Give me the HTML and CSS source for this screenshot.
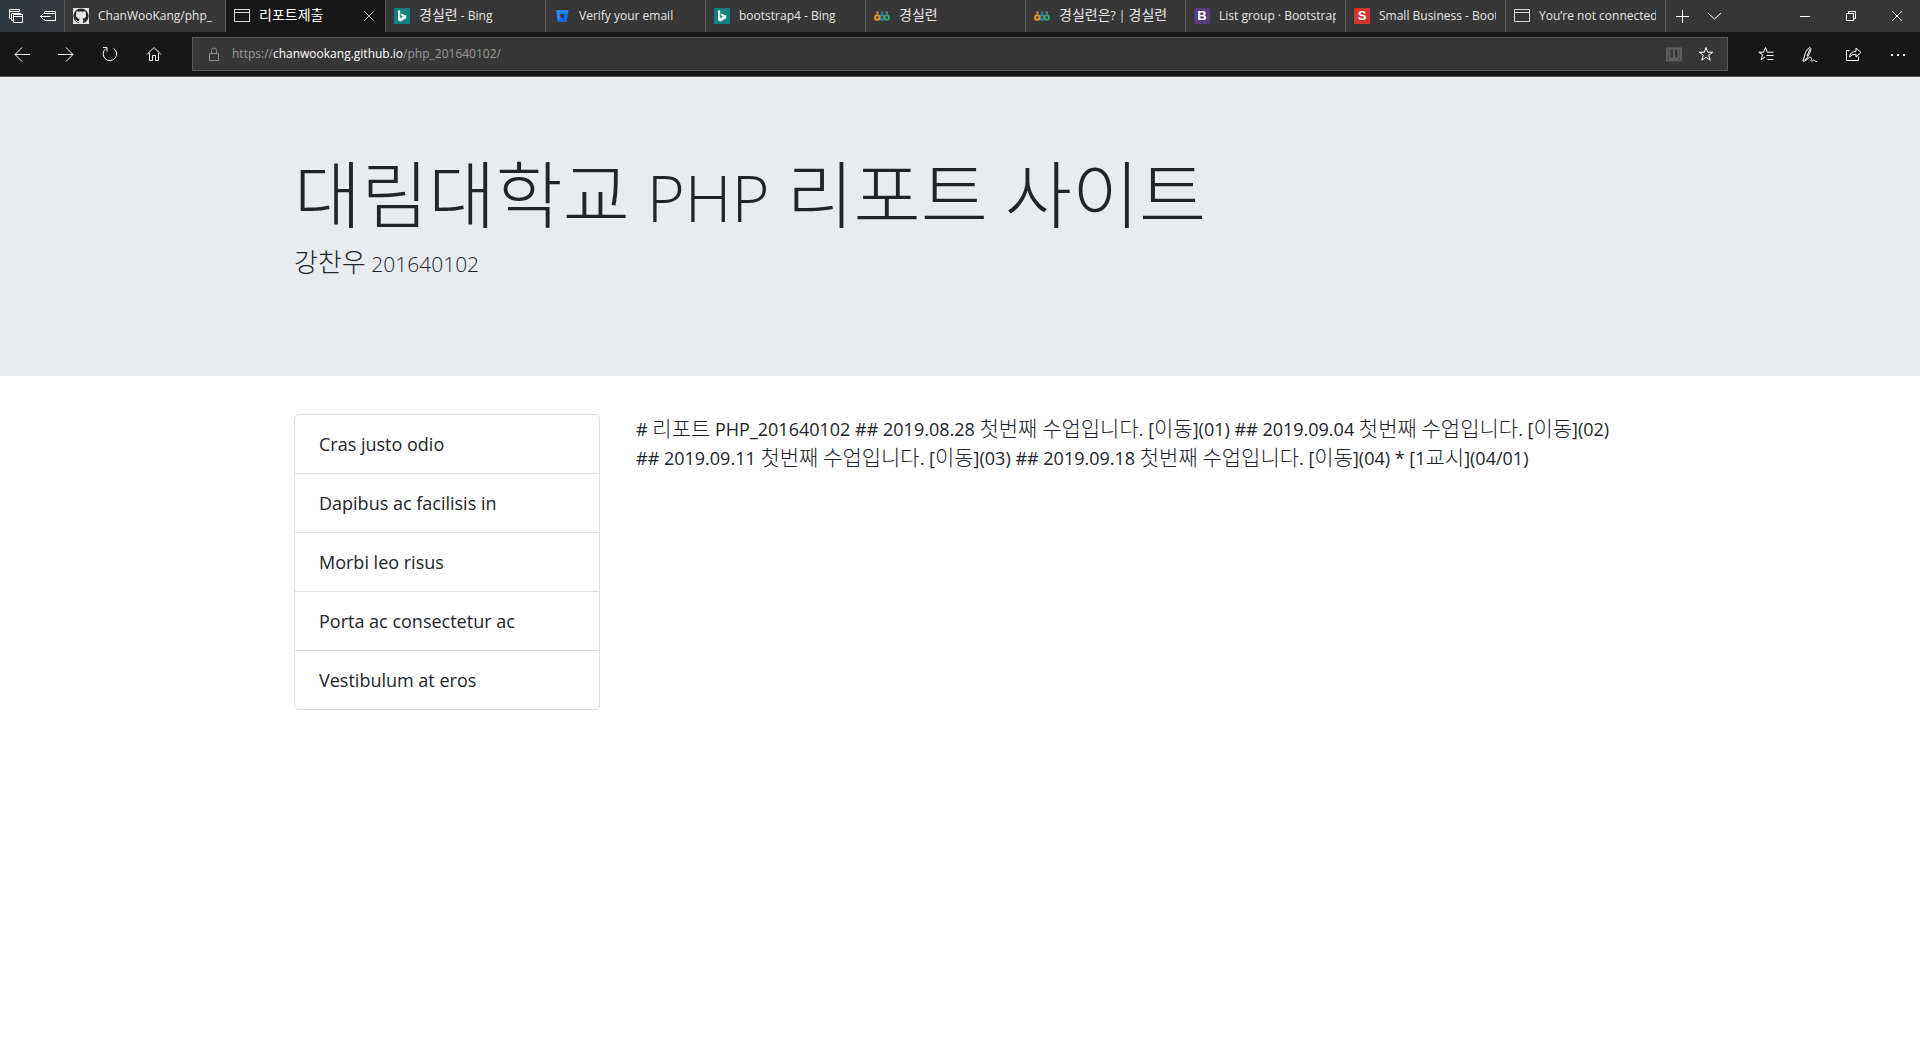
FILE: index.html
```html
<!DOCTYPE html>
<html lang="ko">
<head>
<meta charset="utf-8">
<meta name="viewport" content="width=device-width, initial-scale=1">
<title>리포트제출</title>
<link rel="stylesheet" href="styles.css">
</head>
<body>
<svg class="defs" aria-hidden="true">
  <symbol id="bing" viewBox="0 0 16 16"><path fill="#117f7b" d="M0 0h16v16H0z"/><path fill="#f2f7f7" d="M4 2l2.200.8v7.400l2.800-1.700-1.500-.7-.9-2.300 5.600 2v2.700L6.300 13.500 4 12.200z"/></symbol>
  <symbol id="page" viewBox="0 0 16 16"><path fill="none" stroke="#d8d8d8" d="M.5 1.500h15v12H.5zM.5 4.500h15"/></symbol>
  <symbol id="rings" viewBox="0 0 16 16"><g fill="none" stroke-width="2"><circle cx="8" cy="9.500" r="2.300" stroke="#1c8fd0"/><circle cx="12.700" cy="9.500" r="2.300" stroke="#35a36c"/><circle cx="3.300" cy="9.500" r="2.300" stroke="#e8931c"/></g><circle cx="3.500" cy="4.500" r="1.200" fill="#e8931c"/><circle cx="8.200" cy="4.500" r="1.200" fill="#1c8fd0"/><circle cx="12.900" cy="4.500" r="1.200" fill="#35a36c"/></symbol>
</svg>

<header class="browser">
  <div class="tabstrip">
    <div class="tab-tools">
      <button aria-label="Tabs set aside"><svg width="16" height="16" viewBox="0 0 16 16"><path d="M3.500 10.500h-2v-9h10v2M1.500 3.500h10M5.500 12.500h-2v-7h9v1M5.500 6.500h9v8h-9zM5.500 8.500h9"/></svg></button>
      <button aria-label="Set tabs aside"><svg width="16" height="16" viewBox="0 0 16 16"><path d="M4.500 6V3.500h11v9h-11V11M4.500 5.500h11M.5 8.500h10M3.500 5.500l-3 3 3 3"/></svg></button>
    </div>
    <nav class="tabs" aria-label="Tabs">
      <button class="tab"><svg width="16" height="16" viewBox="0 0 16 16"><path fill="#e4e4e4" d="M0 0h16v16H0z"/><circle cx="8" cy="8" r="7.600" fill="#272727"/><path fill="#e4e4e4" d="M3.500 3l2 .8q2.500-.5 5 0l2-.8.3 2.500q1.300 4.500-3.300 5.300.7.700.7 1.600V16H5.800v-2q-2 .5-2.800-1.500l-.8-.8q1.300-.2 2 1.200.7.600 1.700.2 0-1.300.7-2.300Q2 10 3.200 5.500z"/></svg><span class="label">ChanWooKang/php_</span></button>
      <button class="tab active"><svg width="16" height="16"><use href="#page"/></svg><span class="label"><span class="ko">리포트제출</span></span><svg class="close" width="12" height="12" viewBox="0 0 12 12"><path d="M1 1l10 10M11 1L1 11"/></svg></button>
      <button class="tab"><svg width="16" height="16"><use href="#bing"/></svg><span class="label"><span class="ko">경실련</span> - Bing</span></button>
      <button class="tab"><svg width="16" height="16" viewBox="0 0 16 16"><path fill="#2684ff" fill-rule="evenodd" d="M2 2h12.500l-1.800 12H3.800zM6 6l.7 4h3.100l.6-4z"/><path fill="#0b55d0" fill-opacity=".6" d="M10.400 6h3.500l-1.200 8H3.800l3-4h3z"/></svg><span class="label">Verify your email</span></button>
      <button class="tab"><svg width="16" height="16"><use href="#bing"/></svg><span class="label">bootstrap4 - Bing</span></button>
      <button class="tab"><svg width="16" height="16"><use href="#rings"/></svg><span class="label"><span class="ko">경실련</span></span></button>
      <button class="tab"><svg width="16" height="16"><use href="#rings"/></svg><span class="label"><span class="ko">경실련은</span>? | <span class="ko">경실련</span></span></button>
      <button class="tab"><span class="favicon bootstrap" aria-hidden="true">B</span><span class="label">List group · Bootstrap</span></button>
      <button class="tab"><span class="favicon start" aria-hidden="true">S</span><span class="label">Small Business - Boot</span></button>
      <button class="tab"><svg width="16" height="16"><use href="#page"/></svg><span class="label">You’re not connected</span></button>
    </nav>
    <div class="new-tab">
      <button aria-label="New tab"><svg width="16" height="16" viewBox="0 0 16 16"><path d="M8.500 2v13M2 8.500h13"/></svg></button>
      <button aria-label="Tab previews"><svg width="16" height="16" viewBox="0 0 16 16"><path d="M2 5l6.500 6L15 5"/></svg></button>
    </div>
    <div class="window-controls">
      <button aria-label="Minimize"><svg width="12" height="12" viewBox="0 0 12 12"><path d="M1 6.500h10"/></svg></button>
      <button aria-label="Restore"><svg width="12" height="12" viewBox="0 0 12 12"><path d="M1.500 3.500h7v7h-7zM3.500 3.500v-2h7v7h-2"/></svg></button>
      <button aria-label="Close"><svg width="12" height="12" viewBox="0 0 12 12"><path d="M1 1l10 10M11 1L1 11"/></svg></button>
    </div>
  </div>

  <div class="toolbar">
    <div class="tools nav-tools">
      <button aria-label="Back"><svg width="16" height="16" viewBox="0 0 16 16"><path d="M1 8.500h15M8 1.500l-7 7 7 7"/></svg></button>
      <button aria-label="Forward"><svg width="16" height="16" viewBox="0 0 16 16"><path d="M0 8.500h15M8 1.500l7 7-7 7"/></svg></button>
      <button aria-label="Refresh"><svg width="16" height="16" viewBox="0 0 16 16"><path d="M4 2.500a6.700 6.700 0 1 0 7.500-.2M1 1.500h4v4"/></svg></button>
      <button aria-label="Home"><svg width="16" height="16" viewBox="0 0 16 16"><path d="M1 8.500l7-7 7 7M3.500 7v7.500h3v-5h3v5h3V7"/></svg></button>
    </div>
    <div class="address">
      <svg class="lock" width="12" height="14" viewBox="0 0 12 14"><path d="M1.500 6.500h9v7h-9zM3.500 6.500V3.500a2.500 2.500 0 0 1 5 0v3"/></svg>
      <div class="url" role="textbox" aria-label="Address">https://<span class="host">chanwookang.github.io</span>/php_201640102/</div>
      <button class="reading" aria-label="Reading view"><svg width="16" height="16" viewBox="0 0 16 16"><path d="M1 2.500h14v12H1zM3.500 2.500h3L8 3.500l1.500-1h3v10h-3L8 13.500 6.500 12.500h-3zM8 3v11"/></svg></button>
      <button aria-label="Add to favorites"><svg width="16" height="16" viewBox="0 0 16 16"><path d="M8 1.500l1.700 4.700h5l-4 3 1.500 5L8 11.300l-4.200 2.900 1.500-5-4-3h5z"/></svg></button>
    </div>
    <div class="tools page-tools">
      <button aria-label="Favorites"><svg width="16" height="16" viewBox="0 0 16 16"><path d="M7 10.800l-3.900 3 1.400-5-3.700-2.600h4.800L7.500 1.500l1.600 4.700h6.400M8.500 9.500h7M9.500 13.500h6"/></svg></button>
      <button aria-label="Add notes"><svg width="16" height="16" viewBox="0 0 16 16"><path d="M1 15l2.500-8.500Q5.500 2 8 1.500q2 1-.5 6L4.500 13l-2 .5M5 10l3-7M1 15.500c5-1 6-5.500 8-4s-1.500 3.500.5 3.500 2-1.500 3-.5 1 1 2.500 1"/></svg></button>
      <button aria-label="Share"><svg width="16" height="16" viewBox="0 0 16 16"><path d="M3.500 4.500h-3v10h12v-4M3.500 11Q4 5.500 10 5.500V2l5 4.500-5 4.500V8.200Q6 8 3.500 11z"/></svg></button>
      <button aria-label="More"><svg width="16" height="16" viewBox="0 0 16 16"><path class="dots" d="M1 8h2v2H1zM7 8h2v2H7zM13 8h2v2h-2z"/></svg></button>
    </div>
  </div>
</header>

<section class="jumbotron">
  <div class="container">
    <h1><span class="ko">대림대학교</span> PHP <span class="ko">리포트</span> <span class="ko">사이트</span></h1>
    <p><span class="ko">강찬우</span> 201640102</p>
  </div>
</section>

<main class="container row">
  <ul class="list-group">
    <li>Cras justo odio</li>
    <li>Dapibus ac facilisis in</li>
    <li>Morbi leo risus</li>
    <li>Porta ac consectetur ac</li>
    <li>Vestibulum at eros</li>
  </ul>
  <div class="report"># <span class="ko">리포트</span> PHP_201640102 ## 2019.08.28 <span class="ko">첫번째</span> <span class="ko">수업입니다</span>. [<span class="ko">이동</span>](01) ## 2019.09.04 <span class="ko">첫번째</span> <span class="ko">수업입니다</span>. [<span class="ko">이동</span>](02) ## 2019.09.11 <span class="ko">첫번째</span> <span class="ko">수업입니다</span>. [<span class="ko">이동</span>](03) ## 2019.09.18 <span class="ko">첫번째</span> <span class="ko">수업입니다</span>. [<span class="ko">이동</span>](04) * [1<span class="ko">교시</span>](04/01)</div>
</main>
</body>
</html>
```
FILE: styles.css
```css
* { box-sizing: border-box; }

body {
  margin: 0;
  background: #fff;
  color: #212529;
  font: 18px/29px "Open Sans", "Noto Sans CJK KR", sans-serif;
}

button {
  margin: 0;
  padding: 0;
  border: 0;
  background: none;
  color: inherit;
  font: inherit;
}

svg {
  flex: none;
  fill: none;
  stroke: #fff;
}

symbol, .tab > svg:first-child { stroke: none; }
.defs { display: none; }

.ko {
  font-family: "Noto Sans CJK KR", sans-serif;
  line-height: 0;
}

/* Browser frame */
.browser {
  background: #171717;
  border-bottom: 1px solid #5a5a5a;
  color: #e6e6e6;
  font-size: 12px;
  line-height: 24px;
}

.tabstrip {
  display: flex;
  height: 32px;
  background: #373737;
}

.tab-tools, .new-tab, .window-controls, .tools { display: flex; }

.tab-tools {
  flex: none;
  border-right: 1px solid #5a5a5a;
  background: linear-gradient(90deg, #2d3940, #353a3d);
}

.tab-tools button, .new-tab button {
  display: flex;
  flex: 0 0 32px;
  align-items: center;
  justify-content: center;
}

.tabs {
  display: flex;
  flex: 0 1 1601px;
  min-width: 0;
  border-right: 1px solid #5a5a5a;
}

.tab {
  display: flex;
  flex: 1 1 160px;
  align-items: center;
  gap: 9px;
  min-width: 0;
  padding: 0 9px 0 8px;
  text-align: left;
}

.tab + .tab { border-left: 1px solid #5a5a5a; }

.tab.active {
  padding-right: 10px;
  background: #171717;
  color: #fff;
}

.tab .ko { font-size: 14px; }

.label {
  flex: 1;
  overflow: hidden;
  white-space: nowrap;
}

.close { stroke: #bdbdbd; }

.favicon {
  flex: none;
  width: 16px;
  color: #fff;
  font: bold 13px/16px "Liberation Sans", sans-serif;
  text-align: center;
}

.bootstrap { background: #563d7c; border-radius: 2px; }
.start { background: #d0382f; }

.new-tab { flex: 1; }

.window-controls button {
  display: flex;
  width: 46px;
  align-items: center;
  justify-content: center;
}

.toolbar {
  display: flex;
  height: 44px;
  align-items: center;
}

.tools button {
  display: flex;
  width: 44px;
  height: 44px;
  align-items: center;
  justify-content: center;
}

.nav-tools { width: 192px; }

.page-tools {
  width: 192px;
  padding-left: 16px;
}

.address {
  display: flex;
  flex: 1;
  height: 34px;
  align-items: center;
  gap: 12px;
  padding: 0 13px 0 15px;
  border: 1px solid #5a5a5a;
  background: #373737;
}

.address button { display: flex; }
.address button + button { margin-left: 4px; }
.lock { stroke: #8c8c8c; }

.reading svg {
  stroke: #5e5e5e;
  stroke-width: 2;
}

.url {
  flex: 1;
  color: #999;
}

.host { color: #fff; }
.dots { fill: #fff; stroke: none; }

/* Page */
.container {
  width: 100%;
  max-width: 1368px;
  margin: 0 auto;
  padding: 0 18px;
}

.jumbotron {
  padding: 80px 0 76px;
  background: #e9ecef;
  font-weight: 300;
}

h1 {
  margin: 0 0 8px;
  font-size: 65px;
  font-weight: 300;
  line-height: 81px;
}

h1 .ko { font-size: 73px; }

.jumbotron p {
  margin: 0 0 18px;
  font-size: 21px;
  line-height: 36px;
}

.jumbotron p .ko { font-size: 26px; }

.row {
  display: grid;
  grid-template-columns: 1fr 3fr;
  padding: 38px 0;
}

.list-group {
  margin: 0 18px;
  padding: 0;
  border: 1px solid #dfdfdf;
  border-radius: 5px;
  list-style: none;
}

.list-group li {
  padding: 15px 24px 14px;
}

.list-group li + li { border-top: 1px solid #dfdfdf; }

.report { padding: 1px 18px; }
.report .ko { font-size: 21px; font-weight: 300; }
```
